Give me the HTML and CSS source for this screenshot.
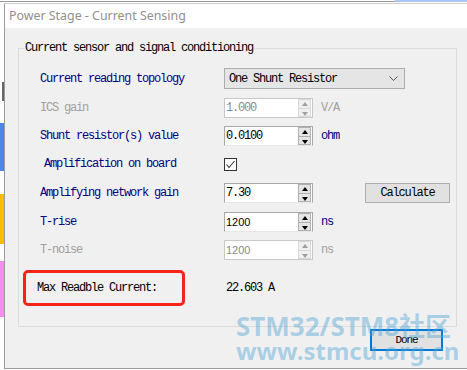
FILE: index.html
```html
<!DOCTYPE html>
<html lang="en">
<head>
    <meta charset="UTF-8">
    <title>Power Stage - Current Sensing</title>
    <link rel="stylesheet" href="styles.css">
</head>
<body>
    <!-- bits of the window behind -->
    <div class="bg-top"><span class="bg-top-tab"></span></div>

    <div class="main">
        <div class="bg-left">
            <span class="blk blk-dark"></span>
            <span class="blk blk-blue"></span>
            <span class="blk blk-yellow"></span>
            <span class="blk blk-pink"></span>
        </div>

        <div class="dialog">
            <div class="title-bar">Power Stage - Current Sensing</div>

            <div class="dialog-body">
                <fieldset class="group">
                    <legend>Current sensor and signal conditioning</legend>

                    <div class="row row-first">
                        <span class="lbl">Current reading topology</span>
                        <div class="combo">
                            <span>One Shunt Resistor</span>
                            <svg class="chev" width="9" height="6" viewBox="0 0 9 6"><path d="M0.5 0.5 L4.5 4.5 L8.5 0.5" fill="none" stroke="#555" stroke-width="1"/></svg>
                        </div>
                    </div>

                    <div class="row row-ics off">
                        <span class="lbl">ICS gain</span>
                        <div class="spin">
                            <span class="spin-val">1.000</span>
                            <span class="spin-btns"><i class="up"></i><i class="down"></i></span>
                        </div>
                        <span class="unit">V/A</span>
                    </div>

                    <div class="row">
                        <span class="lbl">Shunt resistor(s) value</span>
                        <div class="spin">
                            <span class="spin-val">0.0100</span>
                            <span class="spin-btns"><i class="up"></i><i class="down"></i></span>
                        </div>
                        <span class="unit">ohm</span>
                    </div>

                    <div class="row">
                        <span class="lbl lbl-check">Amplification on board</span>
                        <span class="check">
                            <svg width="11" height="11" viewBox="0 0 11 11"><path d="M1.5 5.5 L4 8.5 L9.5 2" fill="none" stroke="#333" stroke-width="1.1"/></svg>
                        </span>
                    </div>

                    <div class="row row-mid">
                        <span class="lbl">Amplifying network gain</span>
                        <div class="spin">
                            <span class="spin-val">7.30</span>
                            <span class="spin-btns"><i class="up"></i><i class="down"></i></span>
                        </div>
                        <span class="unit"></span>
                        <button class="btn btn-calc">Calculate</button>
                    </div>

                    <div class="row row-mid">
                        <span class="lbl">T-rise</span>
                        <div class="spin">
                            <span class="spin-val sans">1200</span>
                            <span class="spin-btns"><i class="up"></i><i class="down"></i></span>
                        </div>
                        <span class="unit">ns</span>
                    </div>

                    <div class="row off">
                        <span class="lbl">T-noise</span>
                        <div class="spin">
                            <span class="spin-val sans">1200</span>
                            <span class="spin-btns"><i class="up"></i><i class="down"></i></span>
                        </div>
                        <span class="unit">ns</span>
                    </div>

                    <div class="row row-max">
                        <span class="max-box">Max Readble Current:</span>
                        <span class="max-val">22.603 A</span>
                    </div>
                </fieldset>

                <div class="footer">
                    <button class="btn btn-done">Done</button>
                </div>

                <div class="watermark">
                    <div class="wm-big">STM32/STM8社区</div>
                    <div class="wm-url">www.stmcu.org.cn</div>
                </div>
            </div>
        </div>
    </div>
</body>
</html>
```

FILE: styles.css
```css
body {
    margin: 0;
    width: 467px;
    height: 370px;
    overflow: hidden;
    background: #fff;
    font-family: "Liberation Mono", monospace;
    font-size: 12px;
    letter-spacing: -1.2px;
    color: #000;
}

/* window behind the dialog */
.bg-top {
    height: 3px;
    display: flex;
    justify-content: flex-end;
    border-bottom: 1px solid #fff;
    box-sizing: border-box;
    box-shadow: inset 0 -1px 0 #9a9a9a;
}
.bg-top-tab {
    width: 72px;
    background: #a9c4f0;
}
.main {
    display: flex;
}
.bg-left {
    width: 4px;
    flex: none;
    display: flex;
    flex-direction: column;
}
.blk {
    display: block;
}
.blk-dark {
    height: 19px;
    margin: 79px 0 0 2px;
    background: #666;
}
.blk-blue {
    height: 48px;
    margin-top: 22px;
    background: #4a86e8;
}
.blk-yellow {
    height: 50px;
    margin-top: 23px;
    background: #fbbc05;
}
.blk-pink {
    height: 56px;
    margin-top: 17px;
    background: #f58cf0;
}

/* dialog */
.dialog {
    position: relative;
    flex: none;
    width: 480px;
    height: 366px;
    border: 1px solid #9b9b9b;
    border-top-color: #d0d0d0;
    border-right: none;
    box-sizing: border-box;
    display: flex;
    flex-direction: column;
}
.title-bar {
    height: 24px;
    flex: none;
    background: #fff;
    padding-left: 4px;
    font-family: "Noto Sans", sans-serif;
    font-size: 12.4px;
    letter-spacing: 0;
    line-height: 24px;
    color: #909090;
}
.dialog-body {
    flex: 1;
    background: #f0f0f0;
    padding: 14px 0 0 13px;
}

.group {
    width: 439px;
    box-sizing: border-box;
    margin: 0;
    padding: 13px 0 20px 21px;
    border: 1px solid #dcdcdc;
}
.group legend {
    margin-left: -16px;
    padding: 0 1px;
    line-height: 13px;
}

.row {
    display: grid;
    grid-template-columns: 184px 89px 52px 85px;
    align-items: center;
    height: 20px;
    margin-top: 8px;
    color: #000080;
}
.row-first {
    margin-top: 0;
    height: 21px;
}
.row-ics {
    margin-top: 9px;
}
.row-mid {
    margin-top: 9px;
}
.row.off {
    color: #a0a0a0;
}
.lbl-check {
    padding-left: 4px;
}

.combo {
    grid-column: 2 / 5;
    width: 181px;
    height: 21px;
    box-sizing: border-box;
    border: 1px solid #adadad;
    background: #e5e5e5;
    color: #000;
    display: flex;
    align-items: center;
    justify-content: space-between;
    padding: 0 6px 0 4px;
}

.spin {
    display: flex;
    height: 20px;
    box-sizing: border-box;
    border: 1px solid #a8a8a8;
    border-bottom-color: #e6e6e6;
    background: #fff;
    color: #000;
}
.off .spin {
    color: #8a8a8a;
    border-color: #c8c8c8;
}
.spin-val {
    flex: 1;
    padding-left: 1px;
    line-height: 18px;
}
.spin-val.sans {
    font-family: "Liberation Sans", sans-serif;
    font-size: 11px;
    letter-spacing: 0;
}
.spin-btns {
    width: 13px;
    margin: 0 1px 0 0;
    display: flex;
    flex-direction: column;
}
.spin-btns i {
    flex: 1;
    position: relative;
    background: #e4e4e4;
    border: 1px solid #b0b0b0;
}
.spin-btns i + i {
    border-top: none;
}
.spin-btns i::before {
    content: "";
    position: absolute;
    left: 3px;
    top: 2px;
    border-left: 3px solid transparent;
    border-right: 3px solid transparent;
}
.spin-btns .up::before {
    border-bottom: 4px solid #000;
}
.spin-btns .down::before {
    top: 3px;
    border-top: 4px solid #000;
}
.off .spin-btns i {
    background: #f0f0f0;
    border-color: #d8d8d8;
}
.off .spin-btns .up::before {
    border-bottom-color: #a0a0a0;
}
.off .spin-btns .down::before {
    border-top-color: #a0a0a0;
}

.unit {
    padding-left: 8px;
}

.check {
    width: 13px;
    height: 13px;
    box-sizing: border-box;
    border: 1px solid #333;
    background: #fff;
    display: flex;
    align-items: center;
    justify-content: center;
}

.btn {
    font-family: "Liberation Mono", monospace;
    font-size: 12px;
    letter-spacing: -1.2px;
    color: #000;
    background: #e1e1e1;
    border: 1px solid #adadad;
    padding: 0;
    box-sizing: border-box;
}
.btn-calc {
    width: 85px;
    height: 20px;
}

.row-max {
    height: 36px;
    margin-top: 10px;
    color: #000;
}
.max-box {
    width: 162px;
    height: 36px;
    margin-left: -17px;
    box-sizing: border-box;
    border: 3px solid #f5231a;
    border-radius: 5px;
    padding-left: 11px;
    display: flex;
    align-items: center;
}
.max-val {
    padding-left: 2px;
}

.footer {
    width: 439px;
    display: flex;
    justify-content: flex-end;
    padding-top: 2px;
}
.btn-done {
    width: 73px;
    height: 22px;
    margin-right: 14px;
    border: 2px solid #0078d7;
    font-size: 11px;
    letter-spacing: -1.1px;
}

.watermark {
    position: absolute;
    left: 231px;
    top: 309px;
    font-family: "Noto Sans", "Noto Sans CJK SC", sans-serif;
    font-weight: bold;
    letter-spacing: 0;
    color: rgba(80, 165, 215, 0.45);
    pointer-events: none;
}
.wm-big {
    font-size: 26px;
    line-height: 26px;
}
.wm-url {
    font-size: 24px;
    line-height: 24px;
}
```
